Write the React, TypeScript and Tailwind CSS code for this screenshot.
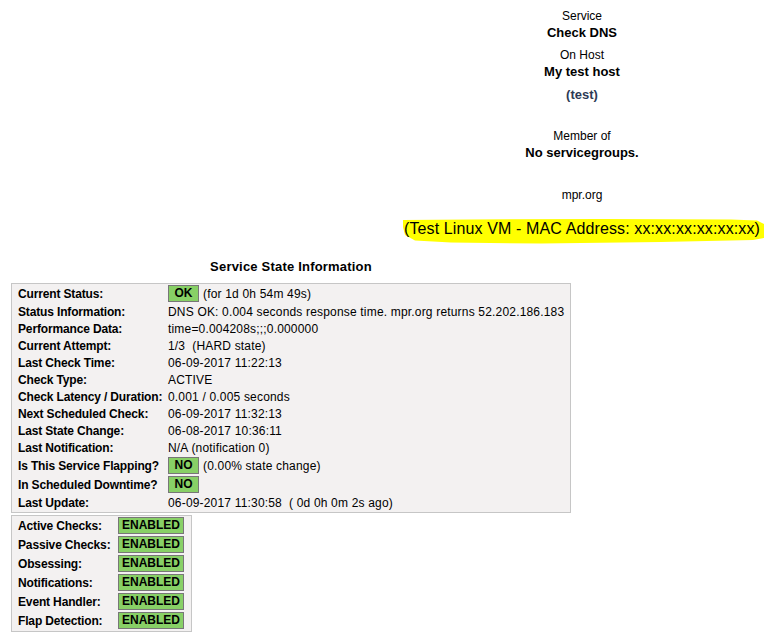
import type { ReactNode } from 'react'

const STATE_ROWS: { label: string; value: ReactNode; badge?: boolean }[] = [
  { label: 'Current Status:', value: <><Badge wide={false}>OK</Badge><span className="ml-[4px]">(for 1d 0h 54m 49s)</span></>, badge: true },
  { label: 'Status Information:', value: 'DNS OK: 0.004 seconds response time. mpr.org returns 52.202.186.183' },
  { label: 'Performance Data:', value: 'time=0.004208s;;;0.000000' },
  { label: 'Current Attempt:', value: '1/3  (HARD state)' },
  { label: 'Last Check Time:', value: '06-09-2017 11:22:13' },
  { label: 'Check Type:', value: 'ACTIVE' },
  { label: 'Check Latency / Duration:', value: '0.001 / 0.005 seconds' },
  { label: 'Next Scheduled Check:', value: '06-09-2017 11:32:13' },
  { label: 'Last State Change:', value: '06-08-2017 10:36:11' },
  { label: 'Last Notification:', value: 'N/A (notification 0)' },
  { label: 'Is This Service Flapping?', value: <><Badge wide={false}>NO</Badge><span className="ml-[4px]">(0.00% state change)</span></>, badge: true },
  { label: 'In Scheduled Downtime?', value: <Badge wide={false}>NO</Badge>, badge: true },
  { label: 'Last Update:', value: '06-09-2017 11:30:58  ( 0d 0h 0m 2s ago)' },
]

const CHECK_ROWS = ['Active Checks:', 'Passive Checks:', 'Obsessing:', 'Notifications:', 'Event Handler:', 'Flap Detection:']

function Badge({ children, wide }: { children: ReactNode; wide: boolean }) {
  return (
    <span
      className={`inline-block h-[17px] leading-[15px] text-center font-bold tracking-normal bg-[#88d066] border border-[#777777] ${wide ? 'w-[66px]' : 'w-[31px]'}`}
    >
      {children}
    </span>
  )
}

// yellow marker stroke behind the host notes line
function Highlight({ children }: { children: ReactNode }) {
  return (
    <span className="relative inline-block">
      <svg className="absolute left-[-3px] top-[-2px] w-[364px] h-[28px]" viewBox="0 0 364 28">
        <path
          d="M2,3 L70,2.5 L200,2 L330,2.5 L356,3.5 L363,7 L363,21 L352,23 L260,25 L140,26.5 L50,25.5 L14,23.5 L4,18 L2,10 Z"
          fill="#ffff00"
        />
      </svg>
      <span className="relative">{children}</span>
    </span>
  )
}

export default function App() {
  return (
    <div className="w-[767px] h-[641px] bg-white text-black text-[12px] font-['Liberation_Sans',Arial,sans-serif] overflow-hidden">
      {/* service / host header */}
      <div className="flex justify-end">
        <div className="w-[370px] flex flex-col items-center text-center pt-[9px] leading-[14px]">
          <div>Service</div>
          <div className="mt-[3px] text-[13px] font-bold">Check DNS</div>
          <div className="mt-[8px]">On Host</div>
          <div className="mt-[3px] text-[13px] font-bold">My test host</div>
          <div className="mt-[9px] text-[13px] font-bold text-[#2d3a55]">(test)</div>
          <div className="mt-[27px]">Member of</div>
          <div className="mt-[3px] text-[13px] font-bold">No servicegroups.</div>
          <div className="mt-[28px]">mpr.org</div>
          <div className="mt-[17px] text-[16px] leading-[20px] tracking-[0.12px]">
            <Highlight>(Test Linux VM - MAC Address: xx:xx:xx:xx:xx:xx)</Highlight>
          </div>
        </div>
      </div>

      <div className="ml-[11px] w-[560px] mt-[20px] text-center text-[13px] font-bold leading-[16px] tracking-[0.2px]">
        Service State Information
      </div>

      <div className="ml-[11px] mt-[8px] w-[560px] bg-[#f3f1f1] border border-[#c6c6c6] pl-[6px] pb-[1px]">
        {STATE_ROWS.map((row) => (
          <div key={row.label} className={`grid grid-cols-[150px_1fr] items-center ${row.badge ? 'h-[19px]' : 'h-[17px]'}`}>
            <span className="font-bold tracking-[-0.15px]">{row.label}</span>
            <span className="whitespace-pre flex items-center tracking-[0.18px]">{row.value}</span>
          </div>
        ))}
      </div>

      <div className="ml-[11px] mt-[2px] w-[181px] bg-[#f3f1f1] border border-[#c6c6c6] pl-[6px] pb-[1px]">
        {CHECK_ROWS.map((label) => (
          <div key={label} className="grid grid-cols-[100px_1fr] items-center h-[19px]">
            <span className="font-bold tracking-[-0.15px]">{label}</span>
            <span className="flex items-center">
              <Badge wide>ENABLED</Badge>
            </span>
          </div>
        ))}
      </div>
    </div>
  )
}
